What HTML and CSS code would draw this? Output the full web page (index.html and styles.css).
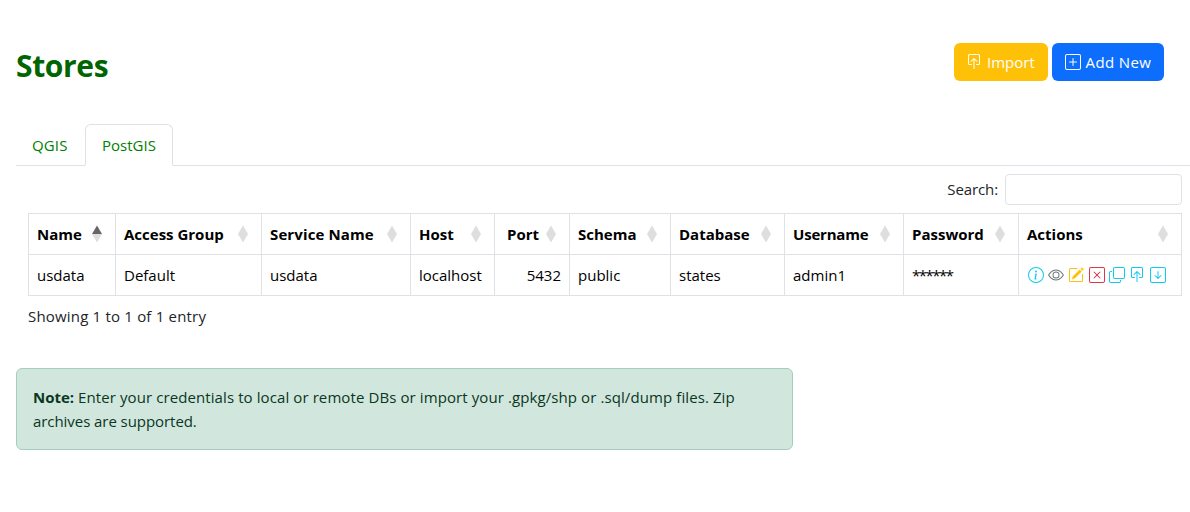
FILE: index.html
```html
<!DOCTYPE html>
<html lang="en">
<head>
<meta charset="utf-8">
<title>Stores</title>
<link rel="stylesheet" href="styles.css">
</head>
<body>
<svg class="sprite" aria-hidden="true">
  <symbol id="i-sort" viewBox="0 0 10 18"><path class="up" d="M5 0.5 10 9H0z"/><path class="down" d="M0 9h10L5 17.5z"/></symbol>
  <symbol id="i-import" viewBox="0 0 16 16"><path d="M3.5 10a.5.5 0 0 1-.5-.5v-8a.5.5 0 0 1 .5-.5h9a.5.5 0 0 1 .5.5v8a.5.5 0 0 1-.5.5h-2a.5.5 0 0 0 0 1h2A1.5 1.5 0 0 0 14 9.5v-8A1.5 1.5 0 0 0 12.5 0h-9A1.5 1.5 0 0 0 2 1.5v8A1.5 1.5 0 0 0 3.5 11h2a.5.5 0 0 0 0-1z"/><path d="M7.646 4.146a.5.5 0 0 1 .708 0l3 3a.5.5 0 0 1-.708.708L8.5 5.707V14.5a.5.5 0 0 1-1 0V5.707L5.354 7.854a.5.5 0 1 1-.708-.708z"/></symbol>
  <symbol id="i-frame" viewBox="0 0 16 16"><path d="M14 1a1 1 0 0 1 1 1v12a1 1 0 0 1-1 1H2a1 1 0 0 1-1-1V2a1 1 0 0 1 1-1zM2 0a2 2 0 0 0-2 2v12a2 2 0 0 0 2 2h12a2 2 0 0 0 2-2V2a2 2 0 0 0-2-2z"/></symbol>
</svg>

<header class="page-head">
  <h1 class="title">Stores</h1>
  <div class="buttons">
    <button class="btn btn-warning"><svg class="icon"><use href="#i-import"/></svg><span class="t-import">Import</span></button>
    <button class="btn btn-primary"><svg class="icon" viewBox="0 0 16 16"><use href="#i-frame"/><path d="M8 4a.5.5 0 0 1 .5.5v3h3a.5.5 0 0 1 0 1h-3v3a.5.5 0 0 1-1 0v-3h-3a.5.5 0 0 1 0-1h3v-3A.5.5 0 0 1 8 4"/></svg><span class="t-add">Add New</span></button>
  </div>
</header>

<nav class="tabs">
  <a class="tab tab-qgis">QGIS</a>
  <a class="tab tab-postgis active">PostGIS</a>
</nav>

<main class="panel">
  <label class="search"><span class="search-label">Search:</span><input type="text" class="search-input"></label>
  <table class="grid">
    <colgroup><col class="c1"><col class="c2"><col class="c3"><col class="c4"><col class="c5"><col class="c6"><col class="c7"><col class="c8"><col class="c9"><col class="c10"></colgroup>
    <thead><tr>
      <th><div class="th sorted"><span>Name</span><svg class="sort"><use href="#i-sort"/></svg></div></th>
      <th><div class="th"><span>Access Group</span><svg class="sort"><use href="#i-sort"/></svg></div></th>
      <th><div class="th"><span class="t-service">Service Name</span><svg class="sort"><use href="#i-sort"/></svg></div></th>
      <th><div class="th"><span>Host</span><svg class="sort"><use href="#i-sort"/></svg></div></th>
      <th><div class="th th-num"><span>Port</span><svg class="sort"><use href="#i-sort"/></svg></div></th>
      <th><div class="th"><span>Schema</span><svg class="sort"><use href="#i-sort"/></svg></div></th>
      <th><div class="th"><span>Database</span><svg class="sort"><use href="#i-sort"/></svg></div></th>
      <th><div class="th"><span class="t-user">Username</span><svg class="sort"><use href="#i-sort"/></svg></div></th>
      <th><div class="th"><span>Password</span><svg class="sort"><use href="#i-sort"/></svg></div></th>
      <th><div class="th"><span>Actions</span><svg class="sort"><use href="#i-sort"/></svg></div></th>
    </tr></thead>
    <tbody><tr>
      <td>usdata</td><td>Default</td><td>usdata</td><td>localhost</td><td class="num">5432</td><td>public</td><td>states</td><td>admin1</td><td class="secret">******</td>
      <td><div class="actions">
        <svg class="icon info" viewBox="0 0 16 16"><path d="M8 15A7 7 0 1 1 8 1a7 7 0 0 1 0 14m0 1A8 8 0 1 0 8 0a8 8 0 0 0 0 16"/><path d="m8.930 6.588-2.290.287-.082.380.450.083c.294.070.352.176.288.469l-.738 3.468c-.194.897.105 1.319.808 1.319.545 0 1.178-.252 1.465-.598l.088-.416c-.200.176-.492.246-.686.246-.275 0-.375-.193-.304-.533zM9 4.500a1 1 0 1 1-2 0 1 1 0 0 1 2 0"/></svg>
        <svg class="icon muted" viewBox="0 0 16 16"><path d="M16 8s-3-5.5-8-5.500S0 8 0 8s3 5.500 8 5.500S16 8 16 8M1.173 8a13 13 0 0 1 1.660-2.043C4.120 4.668 5.880 3.500 8 3.500s3.879 1.168 5.168 2.457A13 13 0 0 1 14.828 8q-.086.130-.195.288c-.335.480-.830 1.120-1.465 1.755C11.879 11.332 10.119 12.500 8 12.500s-3.879-1.168-5.168-2.457A13 13 0 0 1 1.172 8z"/><path d="M8 5.500a2.500 2.500 0 1 0 0 5 2.500 2.500 0 0 0 0-5M4.500 8a3.500 3.500 0 1 1 7 0 3.500 3.500 0 0 1-7 0"/></svg>
        <svg class="icon warning" viewBox="0 0 16 16"><path d="M15.502 1.940a.5.5 0 0 1 0 .706L14.459 3.690l-2-2L13.502.646a.5.5 0 0 1 .707 0l1.293 1.293zm-1.750 2.456-2-2L4.939 9.210a.5.5 0 0 0-.121.196l-.805 2.414a.250.250 0 0 0 .316.316l2.414-.805a.5.5 0 0 0 .196-.120z"/><path fill-rule="evenodd" d="M1 13.500A1.500 1.500 0 0 0 2.500 15h11a1.500 1.500 0 0 0 1.500-1.500v-6a.5.5 0 0 0-1 0v6a.5.5 0 0 1-.5.5h-11a.5.5 0 0 1-.5-.5v-11a.5.5 0 0 1 .5-.5H9a.5.5 0 0 0 0-1H2.500A1.500 1.500 0 0 0 1 2.500z"/></svg>
        <svg class="icon danger" viewBox="0 0 16 16"><use href="#i-frame"/><path d="M4.646 4.646a.5.5 0 0 1 .708 0L8 7.293l2.646-2.647a.5.5 0 0 1 .708.708L8.707 8l2.647 2.646a.5.5 0 0 1-.708.708L8 8.707l-2.646 2.647a.5.5 0 0 1-.708-.708L7.293 8 4.646 5.354a.5.5 0 0 1 0-.708"/></svg>
        <svg class="icon info" viewBox="0 0 16 16"><path fill-rule="evenodd" d="M4 2a2 2 0 0 1 2-2h8a2 2 0 0 1 2 2v8a2 2 0 0 1-2 2H6a2 2 0 0 1-2-2zm2-1a1 1 0 0 0-1 1v8a1 1 0 0 0 1 1h8a1 1 0 0 0 1-1V2a1 1 0 0 0-1-1zM2 5a1 1 0 0 0-1 1v8a1 1 0 0 0 1 1h8a1 1 0 0 0 1-1v-1h1v1a2 2 0 0 1-2 2H2a2 2 0 0 1-2-2V6a2 2 0 0 1 2-2h1v1z"/></svg>
        <svg class="icon info"><use href="#i-import"/></svg>
        <svg class="icon info" viewBox="0 0 16 16"><use href="#i-frame"/><path d="M8.500 4.500a.5.5 0 0 0-1 0v5.793L5.354 8.146a.5.5 0 1 0-.708.708l3 3a.5.5 0 0 0 .708 0l3-3a.5.5 0 0 0-.708-.708L8.500 10.293z"/></svg>
      </div></td>
    </tr></tbody>
  </table>
  <div class="summary">Showing 1 to 1 of 1 entry</div>
</main>

<div class="note"><strong>Note:</strong> <span class="l1">Enter your credentials to local or remote DBs or import your .gpkg/shp or .sql/dump files. Zip</span><br><span class="l2">archives are supported.</span></div>
</body>
</html>
```
FILE: styles.css
```css
* { box-sizing: border-box; }
body {
  margin: 0;
  height: 512px;
  overflow: hidden;
  background: #fff;
  color: #212529;
  font: 15px/24px "Open Sans", "Noto Sans", sans-serif;
}
.sprite { display: none; }
.icon { width: 16px; height: 16px; fill: currentColor; flex: none; }
.page-head {
  display: flex;
  justify-content: space-between;
  padding: 43px 26px 0 16px;
  height: 124px;
}
.title { margin: 4px 0 0; font-size: 30px; line-height: 38px; font-weight: 700; letter-spacing: -0.35px; color: #006400; }
.buttons { display: flex; gap: 4px; }
.btn {
  display: flex;
  align-items: center;
  height: 38px;
  padding: 0 0 0 13px;
  border: 0;
  border-radius: 6px;
  color: #fff;
  font: inherit;
  white-space: nowrap;
}
.btn-warning { width: 94px; padding-left: 12px; gap: 5px; background: #ffc107; }
.btn-primary { width: 112px; gap: 4.5px; background: #0d6efd; }
.t-add { letter-spacing: 0.4px; }
.tabs {
  display: flex;
  height: 42px;
  margin-left: 16px;
  border-bottom: 1px solid #dee2e6;
}
.tab { height: 42px; padding: 8px 0 0 16px; color: #008000; border: 1px solid transparent; white-space: nowrap; }
.tab-qgis { width: 69px; padding-left: 15px; letter-spacing: 0.15px; }
.tab-postgis { width: 88px; }
.tab.active { border-color: #dee2e6 #dee2e6 #fff; border-radius: 6px 6px 0 0; background: #fff; }
.panel { padding: 8px 8px 0 28px; height: 202px; }
.search { display: flex; justify-content: flex-end; align-items: center; gap: 7px; height: 31px; }
.search-label { padding-bottom: 2px; letter-spacing: -0.1px; }
.search-input { width: 177px; height: 31px; border: 1px solid #dee2e6; border-radius: 4px; background: #fff; }
.grid {
  width: 1154px;
  margin-top: 8px;
  table-layout: fixed;
  border-collapse: separate;
  border-spacing: 0;
  border: solid #dee2e6;
  border-width: 1px 0 0 1px;
  color: #000;
}
.c1 { width: 87px; } .c2 { width: 146px; } .c3 { width: 149px; } .c4 { width: 84px; } .c5 { width: 75px; }
.c6 { width: 101px; } .c7 { width: 114px; } .c8 { width: 119px; } .c9 { width: 115px; } .c10 { width: 163px; }
.grid th, .grid td {
  height: 41px;
  padding: 0 8px;
  border: solid #dee2e6;
  border-width: 0 1px 1px 0;
  text-align: left;
  white-space: nowrap;
}
.th { display: flex; justify-content: space-between; align-items: center; padding-right: 5px; }
.th-num { justify-content: flex-end; gap: 7px; }
.t-service { letter-spacing: 0.12px; }
.t-user { letter-spacing: -0.2px; }
.sort { width: 10px; height: 18px; fill: #dedede; color: #dedede; flex: none; }
.sorted .sort { color: #666; }
.up { fill: currentColor; }
.grid td.num { text-align: right; }
.grid td.secret { letter-spacing: -1.5px; }
.actions { display: flex; gap: 4.4px; padding-left: 0.5px; }
.info { color: #0dcaf0; }
.muted { color: #6c757d; }
.warning { color: #ffc107; }
.danger { color: #dc3545; }
.summary { margin-top: 8px; letter-spacing: 0.19px; }
.note {
  width: 777px;
  height: 82px;
  margin-left: 16px;
  padding: 16px 0 0 16px;
  border: 1px solid #a3cfbb;
  border-radius: 6px;
  background: #d1e7dd;
  color: #0a3622;
  white-space: nowrap;
}
.l1 { letter-spacing: 0.095px; }
.l2 { letter-spacing: -0.06px; }
```
